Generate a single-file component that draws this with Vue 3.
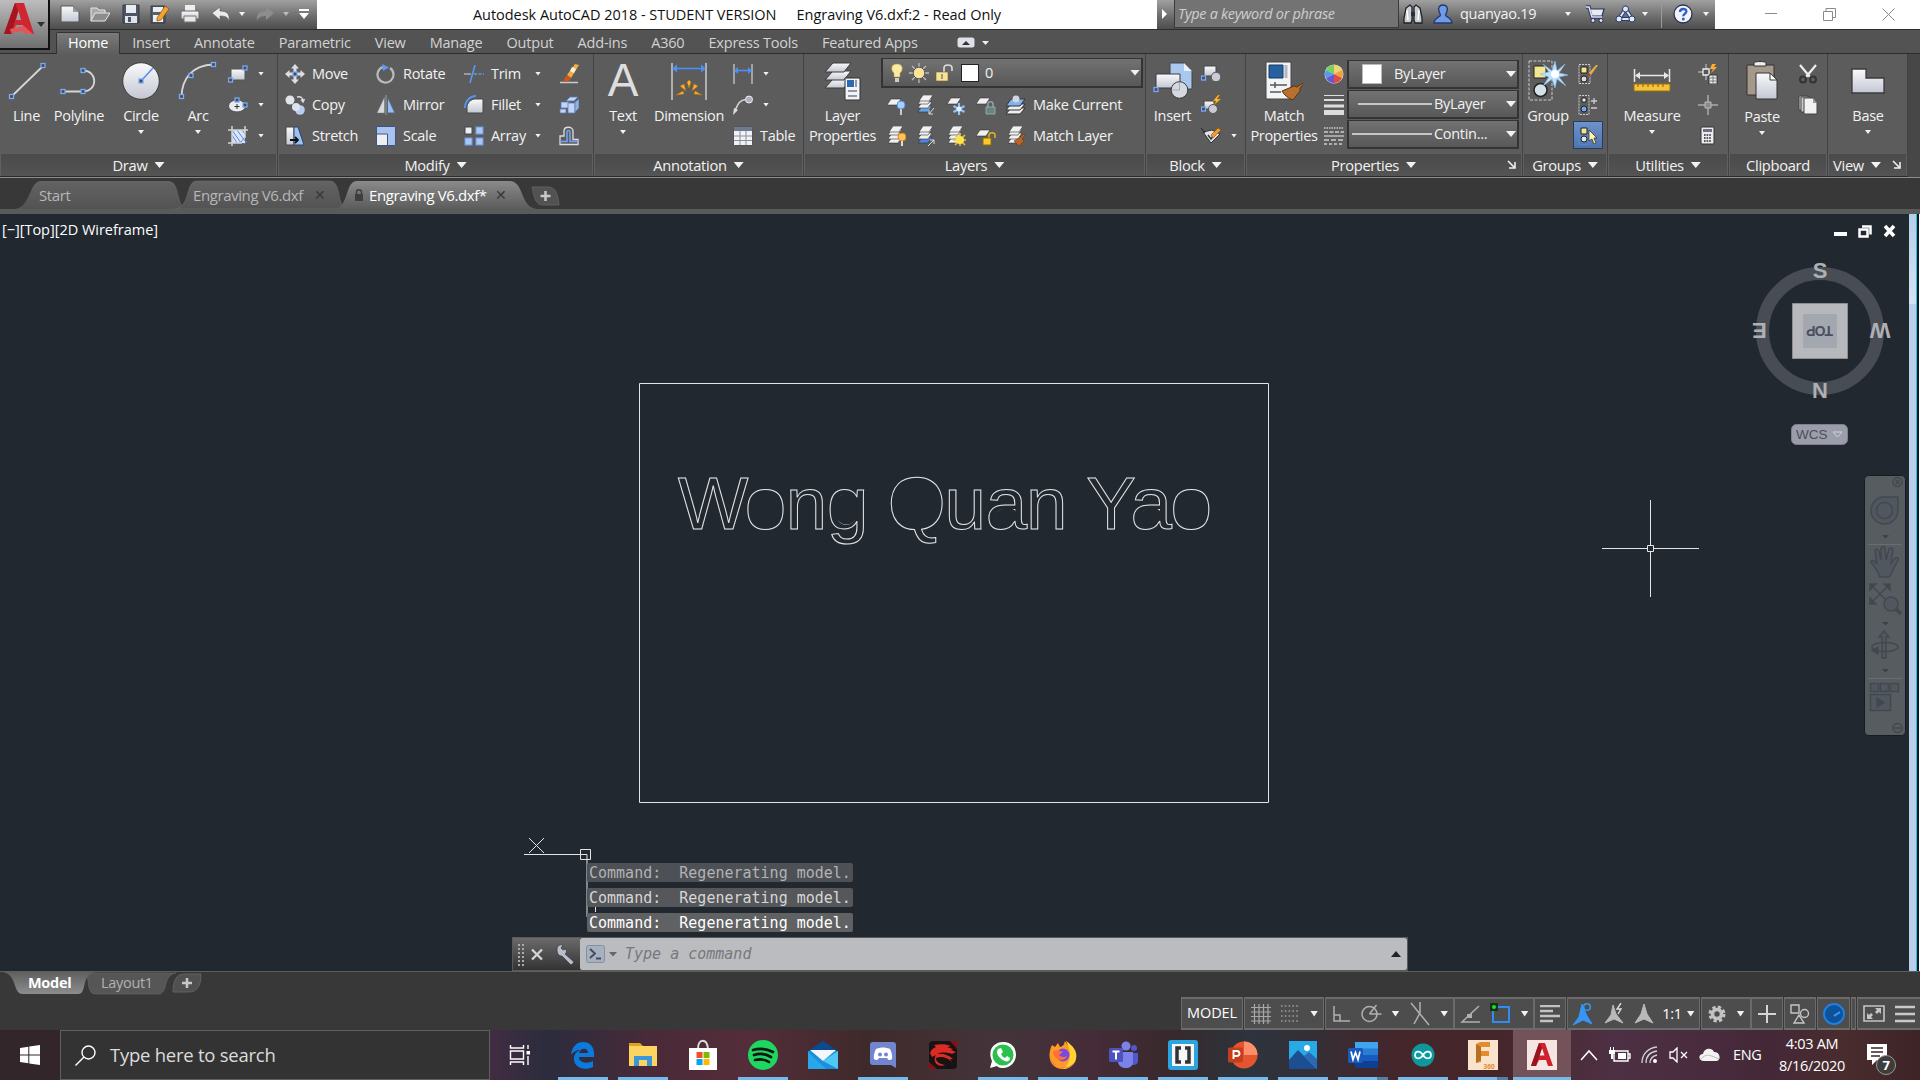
<script setup>
const h = (x, y) => `<rect x="${x - 2}" y="${y - 2}" width="4" height="4" fill="#454a55" stroke="#79a9f7" stroke-width="1.3"/>`
const sheet = (x, y, f = '#f1f1f1') => `<path d="M${x + 4} ${y}h10l-4 6h-10z" fill="${f}" stroke="#333" stroke-width=".6"/>`
const stack = (c) => sheet(2, 11, c) + sheet(2, 7) + sheet(2, 3) + sheet(3, 0)

const icons = {
  // quick access and title bar
  new: [20, 18, `<path d="M1 1h12l6 6v10H1z" fill="url(#gl)" stroke="#555"/><path d="M13 1v6h6z" fill="#999"/>`],
  open: [20, 18, `<path d="M1 16V3h6l2 2h6v3" fill="#aaa" stroke="#e8e8e8"/><path d="M1 16l4-8h15l-5 8z" fill="#8c8c8c" stroke="#e8e8e8"/>`],
  save: [18, 20, `<path d="M1 1h16v18H1z" fill="#4d5563" stroke="#353b47"/><path d="M4 1h10v8H4z" fill="#e8ebf0"/><path d="M3 12h12v7H3z" fill="#dfe3ea"/><path d="M6 13h3v5H6z" fill="#4d5563"/>`],
  saveas: [20, 20, `<path d="M1 2h14v17H1z" fill="#59606d" stroke="#353b47"/><path d="M3 3h10v5H3zM3 11h10v7H3z" fill="#eceef2"/><path d="M7 14l8-12 4 3-8 11-4 1z" fill="#f2a630" stroke="#8a4d10" stroke-width=".7"/>`],
  print: [20, 20, `<path d="M5 1h10v7H5z" fill="#eee"/><rect x="1" y="7" width="18" height="8" rx="1.5" fill="url(#gl)" stroke="#666"/><path d="M4 12h12v6H4z" fill="#e9e9e9" stroke="#777"/>`],
  undo: [20, 16, `<path d="M1 7l8-6v4c7 0 10 3 9 10-1-4-4-5-9-5v4z" fill="#ebebeb" stroke="#666" stroke-width=".7"/>`],
  redo: [20, 16, `<path d="M19 7l-8-6v4c-7 0-10 3-9 10 1-4 4-5 9-5v4z" fill="#8d8d8d"/>`],
  customize: [12, 12, `<path d="M1 1h10v2H1zM1 5h10l-5 6z" fill="#fff"/>`],
  binoculars: [20, 20, `<path d="M3 4l4-3 2 2v13l-1 3H1v-5zM17 4l-4-3-2 2v13l1 3h7v-5z" fill="#c9ccd2" stroke="#1f2226" stroke-width="1.3"/><path d="M8 8h4v4H8z" fill="#2a2d33"/><path d="M4 6l1 10M16 6l-1 10" stroke="#fff" stroke-width="1.5"/>`],
  user: [20, 20, `<path d="M10 1c4 0 5 3 4 6-.4 2-1 3-1.500 4 0 2 6 2 6.500 8H1c.5-6 6.500-6 6.500-8C7 10 6.400 9 6 7 5 4 6 1 10 1z" fill="#6f9bea" stroke="#263a68" stroke-width="1.3"/>`],
  cart: [20, 18, `<path d="M1 2h3l3 10h10" stroke="#29345a" stroke-width="3.600" fill="none"/><path d="M5 4h14l-2 7H7z" fill="#e7eaf2" stroke="#29345a" stroke-width="1.2"/><path d="M1 2h3l3 10h10" stroke="#dfe5f5" stroke-width="1.600" fill="none"/><circle cx="8" cy="15.500" r="2" fill="#dfe5f5" stroke="#29345a"/><circle cx="16" cy="15.500" r="2" fill="#dfe5f5" stroke="#29345a"/>`],
  a360: [21, 18, `<path d="M10.500 4L4 14h13z" fill="none" stroke="#2c3c6e" stroke-width="4"/><path d="M10.500 4L4 14h13z" fill="none" stroke="#dfe6f7" stroke-width="2"/><g fill="#e3e8f4" stroke="#2c3c6e"><circle cx="10.500" cy="4" r="3"/><circle cx="4" cy="14" r="3"/><circle cx="17" cy="14" r="3"/></g>`],
  help: [20, 20, `<circle cx="10" cy="10" r="9" fill="#f1f3f8" stroke="#2b3552" stroke-width="1.300"/><path d="M7 8c0-4 6.500-4 6.300-.5 0 2-3 2.300-3 4.800" fill="none" stroke="#2d5fc4" stroke-width="2.400"/><circle cx="10.300" cy="15" r="1.500" fill="#2d5fc4"/>`],
  minimise: [12, 12, `<path d="M0 5.500h12" stroke="#8a8a8a"/>`],
  restore: [13, 13, `<path d="M.5 3.500h9v9h-9zM3 3V.5h9.500v9H10" fill="none" stroke="#8a8a8a"/>`],
  close: [13, 13, `<path d="M.5 .5l12 12m0-12l-12 12" stroke="#8a8a8a"/>`],
  // draw
  line: [40, 40, `<path d="M5 35L36 5" stroke="#d5d5d5" stroke-width="1.800"/>${h(4.500, 35.500)}${h(36, 4.500)}`],
  polyline: [40, 40, `<path d="M4 30.500h20c15 0 15-21 0-21" fill="none" stroke="#d5d5d5" stroke-width="1.800"/>${h(4, 30.500)}${h(24, 30.500)}${h(24, 9.500)}`],
  circle: [40, 40, `<circle cx="20" cy="20" r="18.300" fill="url(#gl)" stroke="#3b3b3b"/><path d="M20 20L32 7" stroke="#4d8df0" stroke-width="1.500"/>${h(20, 20)}`],
  arc: [40, 40, `<path d="M3.500 35.500C4 18 14 4 35.500 3.500" fill="none" stroke="#d5d5d5" stroke-width="1.800"/>${h(3.500, 35.500)}${h(13, 14.500)}${h(35.500, 3.500)}`],
  rect: [20, 18, `<path d="M3 4h14v11H3z" fill="url(#gl)" stroke="#555"/>${h(2.500, 15)}${h(17, 3)}`],
  ellipse: [20, 16, `<ellipse cx="9" cy="9" rx="8.500" ry="6" fill="#e9ebf1" stroke="#555"/><path d="M9 7v5M6.500 9.500h5" stroke="#333"/>${h(9, 3)}${h(17, 8)}`],
  hatch: [20, 20, `<path d="M4 4h13v13H4z" fill="#dbe6fb"/><path d="M4 9l5 8M4 4l9 13M9 4l8 11M14 4l3 4M12 17l6-7M16 18l3-3" stroke="#5687dd"/><path d="M0 4h20M0 17h14M4 0v20M17 0v12" stroke="#d2d2d2" stroke-width="1.500"/>`],
  // modify
  move: [20, 20, `<path d="M10 0l4 4.500h-2.500V8h-3V4.500H6zM10 20l4-4.500h-2.500V12h-3v3.500H6zM0 10l4.500-4v2.500H8v3H4.500V14zM20 10l-4.500-4v2.500H12v3h3.500V14z" fill="#dcdee3"/>${h(10, 10)}`],
  copy: [20, 20, `<circle cx="5" cy="5" r="4.500" fill="#e3e4e8"/><circle cx="15" cy="15" r="4.800" fill="#b9cdf0"/><circle cx="11" cy="12" r="4" fill="#dce3f0"/><path d="M12 2c4-1 6 1 6 4m-2-1.500l2 2.500 1.500-3" stroke="#ddd" fill="none" stroke-width="1.300"/>`],
  stretch: [20, 20, `<path d="M1 1h8v18H1z" fill="url(#gl)" stroke="#444"/><path d="M9 1h4l6 18H9z" fill="#9dc0ee" stroke="#2c456c"/><path d="M5 14h8m-3-3l3 3-3 3" stroke="#111" stroke-width="1.800" fill="none"/>`],
  rotate: [20, 20, `<path d="M14 4a8 8 0 1 1-7-1" fill="none" stroke="#b9bbc0" stroke-width="2.200"/><path d="M6 0l7 3.500L7 7z" fill="#5a9cf5"/>`],
  mirror: [20, 20, `<path d="M8.500 2v16H1z" fill="#d7d9de" stroke="#777" stroke-width=".5"/><path d="M11.500 2v16H19z" fill="#93bdf5" stroke="#567"/><path d="M10 0v20" stroke="#9a9a9a"/>`],
  scale: [20, 20, `<path d="M.5 .5h19v19h-19z" fill="#a9c3ee" stroke="#3a5583"/><path d="M.5 8h11v11.500H.5z" fill="#eceef2" stroke="#3a5583"/>`],
  trim: [20, 18, `<path d="M0 9h7" stroke="#aaa" stroke-width="1.600"/><path d="M11 0L6 18" stroke="#5b9af0" stroke-width="1.600"/><path d="M10 9h10" stroke="#5b9af0" stroke-width="1.400" stroke-dasharray="3 1.500"/>`],
  fillet: [20, 20, `<path d="M3 18v-6c0-4 4-8 8-8h8v14z" fill="url(#gl)" stroke="#444"/><path d="M1 13C1 6 6 1 12 1" stroke="#5793ee" stroke-width="2" fill="none"/>`],
  array: [20, 20, `<rect x="1" y="1" width="7" height="7" fill="#eef0f4" stroke="#444"/><g fill="#a9c6f4" stroke="#6b9be4"><rect x="12" y="1" width="7" height="7"/><rect x="1" y="12" width="7" height="7"/><rect x="12" y="12" width="7" height="7"/></g>`],
  erase: [20, 20, `<path d="M1 18.500h18" stroke="#ccc" stroke-width="1.500"/><path d="M16 0l4 1-8 13-4-3z" fill="#f0ad48"/><path d="M13 3l4 2-2 4-4-2z" fill="#fff0d8"/><path d="M8 11l4 3c-2 4-5 4-8 3z" fill="#d4541d"/>`],
  explode: [20, 18, `<g fill="#c3d5f2" stroke="#587bb5" stroke-width=".8"><path d="M2 6h8v6H2z"/><path d="M1 13h6v4H1z"/><path d="M7 5l4-4h8l-4 4z"/><path d="M9 7h7v10H9z"/><path d="M16 6l4-3v9l-4 4z" fill="#8fb2e6"/></g>`],
  offset: [20, 20, `<path d="M1 18.500h18v-5h-5V5c0-5-9-5-9 0v5H1z" fill="none" stroke="#dedede" stroke-width="1.300"/><path d="M1 15.500h7V6c0-2 3-2 3 0v9.500h8" fill="none" stroke="#70a4f5" stroke-width="1.500"/>`],
  // annotation
  dimension: [36, 38, `<path d="M1 1v37M35 1v37" stroke="#ccc" stroke-width="1.500"/><path d="M4 6.500h28" stroke="#4d8ff2" stroke-width="1.600"/><path d="M1 6.500l5-4v8zM35 6.500l-5-4v8z" fill="#4d8ff2"/><g fill="#f9b42c" stroke="#b8690f" stroke-width=".6"><path d="M16 20l2 6 2-6-2-2zM9 24l6 5-2-7zM27 24l-6 5 2-7zM5 33l7-4 1 3zM31 33l-7-4-1 3z"/></g>`],
  lineardim: [20, 20, `<path d="M1 0v20M19 0v20" stroke="#bbb" stroke-width="1.500"/><path d="M3 6.500h14" stroke="#4d8ff2" stroke-width="1.600"/><path d="M1 6.500l4-3.500v7zM19 6.500l-4-3.500v7z" fill="#4d8ff2"/>`],
  leader: [20, 20, `<path d="M2 16C5 8 7 5 13 4.500" stroke="#d5d5d5" stroke-width="1.600" fill="none"/><path d="M0 20l1-7 4 2z" fill="#ddd"/><circle cx="16" cy="4.500" r="3.500" fill="#aeb2bd" stroke="#eee"/>`],
  table: [20, 20, `<path d="M.5 .5h19v19H.5z" fill="#f1f2f5" stroke="#555"/><path d="M1 1h18v4H1z" fill="#707a8d"/><path d="M1 10h18M1 14.500h18M7 5v14M13 5v14" stroke="#8b8f99"/>`],
  // layers
  layerprops: [38, 40, `<g fill="url(#gl)" stroke="#3c3c3c"><path d="M9 18h18l-7 9H1z"/><path d="M9 10h18l-7 9H1z"/><path d="M9 2h18l-7 9H1z"/></g><path d="M21 17h15v22H21z" fill="#f2f3f6" stroke="#333"/><path d="M23 19h7v7h-7z" fill="#2e6ab2"/><path d="M32 19v7M24 30h9M24 35h9" stroke="#778" stroke-width="1.500"/>`],
  bulb: [12, 20, `<path d="M6 1c7 0 6 7 3 9v4H3v-4C0 8-1 1 6 1z" fill="#fbe9a8" stroke="#b59a3d" stroke-width=".6"/><path d="M4 15h4v4H4z" fill="#ccc"/>`],
  sun: [20, 20, `<path d="M10 0v20M0 10h20M3 3l14 14M17 3L3 17" stroke="#bcbcbc" stroke-width="1.300"/><circle cx="10" cy="10" r="5.800" fill="#fbe39a" stroke="#555"/>`],
  unlock: [20, 18, `<path d="M9 9V4c0-4 8-4 8 0v3" fill="none" stroke="#dedede" stroke-width="1.600"/><path d="M1 8h12v9H1z" fill="#f8e29a" stroke="#765f1e" stroke-width=".6"/><path d="M7 10v5" stroke="#554"/>`],
  layoff: [20, 20, `${sheet(1, 4)}<circle cx="15" cy="10" r="4" fill="#a8d0ff" stroke="#5593dd"/><path d="M15 14v6" stroke="#ccc" stroke-width="2"/>`],
  laymove: [20, 20, `${stack('#64a3ec')}<path d="M18 13l-5 6m0-4v4h4" stroke="#ddd" fill="none"/>`],
  layfreeze: [20, 20, `${sheet(1, 3)}<path d="M13 8v12M7.500 11l11 6M7.500 17l11-6" stroke="#8fc1fb" stroke-width="2.200"/><circle cx="13" cy="14" r="2.500" fill="#e3f1ff"/>`],
  laylock: [20, 20, `${sheet(0, 3)}<path d="M12 12V9c0-3 5-3 5 0v3" fill="none" stroke="#8fa5a4" stroke-width="1.500"/><path d="M10 12h9v7h-9z" fill="#688482" stroke="#9db5b3" stroke-width=".8"/>`],
  laycur: [20, 20, `<path d="M5 13h14l-5 6H0z" fill="#eee" stroke="#333"/><path d="M5 9h14l-5 6H0z" fill="#eee" stroke="#333"/><path d="M5 4h14l-5 7H0z" fill="#7fb2ee" stroke="#333"/><circle cx="10" cy="4" r="3.500" fill="#d2d5dc"/>`],
  layon: [20, 20, `${stack('#f1f1f1')}<circle cx="16" cy="11" r="4" fill="#ffc457" stroke="#e08520"/><path d="M16 15v5" stroke="#ddd" stroke-width="2"/>`],
  layunmove: [20, 20, `${stack('#4a86dd')}<path d="M12 20l6-6m-4 0h4v4" stroke="#ddd" fill="none"/>`],
  laythaw: [20, 20, `${stack('#f1f1f1')}<path d="M14 7v14M7 14h13M9 9l10 10M19 9L9 19" stroke="#e7c235" stroke-width="1.500"/><circle cx="14" cy="14" r="4" fill="#ffe34d"/>`],
  layunlock: [20, 20, `${sheet(0, 4)}<path d="M13 13V9c0-3 6-3 6 0v3" fill="none" stroke="#e3b21c" stroke-width="1.500"/><path d="M7 12h8v7H7z" fill="#f7c92b" stroke="#8d6b08"/>`],
  laymatch: [20, 20, `${stack('#f1f1f1')}<path d="M19 9l-3 4 2 2-5 5-5-5 5-3 1 0 3-4z" fill="#b8642a" stroke="#6e3208" stroke-width=".6"/>`],
  // block
  insert: [40, 38, `<path d="M17 1h14l8 8v18H17z" fill="#a9c8ee" stroke="#444"/><path d="M31 1v8h8z" fill="#eaf1fb"/><path d="M3 12h24v14H3z" fill="url(#gl)" stroke="#3b3b3b"/><circle cx="26.500" cy="28" r="8.300" fill="#d5d8e0" stroke="#3b3b3b"/><path d="M26.500 20v8h-8" stroke="#a5a9b3" fill="none"/>${h(3, 27.500)}`],
  createblock: [20, 18, `<path d="M3 1h12v10H3z" fill="url(#gl)" stroke="#444"/><circle cx="15" cy="12" r="4.800" fill="#c8cbd4" stroke="#555"/>${h(2.500, 13)}`],
  editblock: [20, 20, `<path d="M3 6h10v8H3z" fill="url(#gl)" stroke="#444"/><circle cx="12" cy="14" r="4.500" fill="#c8cbd4" stroke="#555"/>${h(2.500, 14)}<path d="M17 0l-5 6h3l-2 4 7-6h-4l3-4z" fill="#ffbe2e" stroke="#a8650d" stroke-width=".5"/>`],
  attrs: [20, 18, `<path d="M2 5l8 11 9-9-8-4z" fill="#e2e3e8" stroke="#333"/><path d="M7 8l3 4 4-5" stroke="#333" fill="none" stroke-width="1.500"/><path d="M0 1l4 5" stroke="#222"/><path d="M10 8l7-7 3 2-8 8z" fill="#f29c2c" stroke="#8c4b0d" stroke-width=".6"/>`],
  // properties
  matchprops: [38, 40, `<path d="M1 1h25v37H1z" fill="#f3f4f7" stroke="#444"/><path d="M4 4h14v13H4z" fill="#27619f" stroke="#173b61"/><path d="M21 4v13" stroke="#b4b7c0" stroke-width="3"/><path d="M5 24h17M5 31h11M10 21v6" stroke="#555" stroke-width="1.500"/><path d="M38 22l-6 4-3-1-12 5c2 4 7 8 11 9l7-9v-3l3-3z" fill="#b96f2d" stroke="#5e3411"/>`],
  wheel: [20, 20, `<circle cx="10" cy="10" r="9.500" fill="#ddd"/><path d="M10 10V1a9 9 0 0 1 8 5z" fill="#f2d472"/><path d="M10 10l8-4a9 9 0 0 1 0 8z" fill="#f0a33c"/><path d="M10 10l8 4a9 9 0 0 1-8 5z" fill="#e04b42"/><path d="M10 10v9a9 9 0 0 1-8-5z" fill="#6a57d6"/><path d="M10 10l-8 4a9 9 0 0 1 0-8z" fill="#4f9df0"/><path d="M10 10L2 6a9 9 0 0 1 8-5z" fill="#79d05b"/>`],
  weights: [20, 20, `<path d="M0 .5h20" stroke="#ddd"/><path d="M0 5h20" stroke="#ddd" stroke-width="2"/><path d="M0 11h20" stroke="#ddd" stroke-width="3"/><path d="M0 17.500h20" stroke="#ddd" stroke-width="5"/>`],
  linetypes: [20, 18, `<g stroke="#ccc" stroke-width="1.300"><path d="M0 1h20" stroke-dasharray="1.500 1"/><path d="M0 5h20" stroke-dasharray="4 1.500"/><path d="M0 9h20"/><path d="M0 13h20" stroke-dasharray="5 2"/><path d="M0 17h20" stroke-dasharray="3 2"/></g>`],
  // groups
  group: [40, 42, `<rect x="1" y="1" width="23" height="39" fill="none" stroke="#ccc" stroke-dasharray="3 1.500"/><path d="M6 6h12v12H6z" fill="#f2e68e" stroke="#222"/><circle cx="12.500" cy="30" r="6.500" fill="#d4e2e8" stroke="#222" stroke-width="1.500"/><path d="M27 1l2 10 8-7-6 9 9 2-9 2 7 9-9-7-2 9-3-9-9 7 6-9-9-3 9-2-6-8 9 7z" fill="#bfe0fb" stroke="#7fbdf2" stroke-width=".6"/><circle cx="27" cy="14" r="4" fill="#fff"/>`],
  groupedit: [20, 20, `<rect x="1" y=".5" width="11" height="19" fill="none" stroke="#ccc" stroke-dasharray="2 1"/><path d="M3 3h6v6H3z" fill="#f2e68e" stroke="#222"/><circle cx="6" cy="15" r="3" fill="#d7dce2" stroke="#222"/><path d="M20 1l-2 0-7 8 2 2z" fill="#e8b33c"/><path d="M10 13l1-4 2 2z" fill="#d3371d"/>`],
  groupadd: [20, 20, `<rect x="1" y=".5" width="10" height="19" fill="none" stroke="#ccc" stroke-dasharray="2 1"/><path d="M4 3h4v4H4z" fill="#eee" stroke="#222"/><circle cx="6" cy="14" r="3" fill="#7ba4ea" stroke="#123"/><path d="M13 6h6M16 3v6M13 13h6" stroke="#ccc" stroke-width="1.300"/>`],
  groupsel: [20, 20, `<rect x="1" y=".5" width="10" height="19" fill="none" stroke="#4e8df0" stroke-dasharray="2 1"/><path d="M3 3h6v6H3z" fill="#f2e68e" stroke="#222"/><circle cx="6" cy="14" r="3" fill="#dfe5ec" stroke="#222"/><path d="M11 5v11l3-2 2 5 2-1-2-5h3z" fill="#fff3b0" stroke="#222" stroke-width=".7"/>`],
  // utilities, clipboard, view
  measure: [38, 24, `<path d="M1.500 0v13M36.500 0v13M3 6.500h32" stroke="#e8e8e8" stroke-width="1.500"/><path d="M2 6.500l5-3.500v7zM36 6.500l-5-3.500v7z" fill="#e8e8e8"/><path d="M1 15h36v7H1z" fill="#f3c33a" stroke="#a06f0c"/><path d="M5 15v3M10 15v3M15 15v3M20 15v3M25 15v3M30 15v3" stroke="#8a5e0a"/>`],
  quickcalc: [20, 20, `<path d="M8 0v16M0 8h12" stroke="#ccc"/><path d="M5 5h6v6H5z" fill="#555" stroke="#eee" stroke-width="1.300"/><path d="M14 0l-2 5h3l-2 4 6-6h-3l2-3z" fill="#ffae2b"/><path d="M11 11h8v9h-8z" fill="#eee" stroke="#333"/><path d="M12 14h6M12 17h6M15 12v7" stroke="#777"/>`],
  point: [20, 20, `<path d="M10 0v20M0 10h20" stroke="#aaa" stroke-width="1.500"/><path d="M7 7h6v6H7z" fill="#8a8a8a" stroke="#bbb"/>`],
  calc: [16, 20, `<rect x="1" y="1" width="13" height="17" rx="1" fill="#ececf0" stroke="#333"/><path d="M3 3h9v3H3z" fill="#6b7180"/><path d="M4 9h7M4 12h7M4 15h7" stroke="#555" stroke-width="2" stroke-dasharray="1.600 1"/>`],
  paste: [32, 40, `<path d="M1 4h27v30H1z" fill="#a5998c" stroke="#333"/><path d="M8 2c0-2 12-2 12 0v3H8z" fill="#eee" stroke="#333"/><path d="M10 12h14l7 7v19H10z" fill="url(#gl)" stroke="#333"/><path d="M24 12v7h7z" fill="#fff" stroke="#333"/>`],
  cut: [20, 20, `<path d="M2 1l10 12M18 1L8 13" stroke="#eee" stroke-width="2.200"/><circle cx="5" cy="15.500" r="3" fill="none" stroke="#333" stroke-width="2"/><circle cx="15" cy="15.500" r="3" fill="none" stroke="#333" stroke-width="2"/>`],
  copyclip: [20, 20, `<path d="M1 1h9v14H1z" fill="#ccc" stroke="#444"/><path d="M3 2h9v15H3z" fill="#ccc" stroke="#444"/><path d="M6 3h9l4 5v11H6z" fill="#f2f2f2" stroke="#444"/><path d="M15 3v5h4z" fill="#999"/>`],
  base: [34, 26, `<path d="M1 1h14v9h18v15H1z" fill="url(#gl)" stroke="#3b3b3b" stroke-width="1.300"/>`],
  // status bar
  sgrid: [20, 20, `<path d="M3.500 0v20M8 0v20M12.500 0v20M17 0v20M0 3.500h20M0 8h20M0 12.500h20M0 17h20" stroke="#a8a8a8" stroke-width="1.200"/>`],
  sdots: [20, 20, `<path d="M1 2h19M1 7h19M1 12h19M1 17h19" stroke="#9d9d9d" stroke-width="1.600" stroke-dasharray="1.600 2.200"/>`],
  ortho: [20, 20, `<path d="M3 2v15h16M3 11h6v6" stroke="#b0b0b0" stroke-width="1.500" fill="none"/>`],
  polar: [22, 20, `<circle cx="9.500" cy="10" r="7.500" stroke="#b0b0b0" stroke-width="1.500" fill="none"/><path d="M9.500 10h12M9.500 10l7-9" stroke="#b0b0b0" stroke-width="1.500"/>`],
  iso: [22, 24, `<path d="M2 1l18 22M11 0v11M11 11L5 22" stroke="#b0b0b0" stroke-width="1.500"/>`],
  otrack: [22, 20, `<path d="M20 2L3 18h18" stroke="#b0b0b0" stroke-width="1.500" fill="none"/><path d="M8 10h5v4H8z" fill="#b0b0b0"/>`],
  osnap: [22, 22, `<path d="M3 4h16v15H3z" stroke="#2f8df0" stroke-width="2" fill="none"/><path d="M0 0h8v8H0z" fill="#143314"/><circle cx="4" cy="4" r="2" fill="#19e32d"/>`],
  lweight: [20, 18, `<path d="M0 1h20M0 6h13M0 11h20M0 16h13" stroke="#c2c2c2" stroke-width="2.500"/>`],
  annoblue: [22, 24, `<path d="M10 2l4 10 6 10-9-4-10 5 6-8z" fill="#3795f5" stroke="#3795f5"/><circle cx="15" cy="5" r="3.300" fill="none" stroke="#3795f5" stroke-width="1.500"/>`],
  annoauto: [22, 22, `<path d="M10 2l3 9 7 9-9-4-9 4 6-8z" fill="#b9b9b9" stroke="#b9b9b9"/><path d="M18 0l-4 6h4l-3 5" stroke="#ddd" fill="none" stroke-width="1.400"/>`],
  anno: [20, 22, `<path d="M10 1l3 10 6 9-9-4-9 4 6-9z" fill="#b9b9b9" stroke="#b9b9b9"/>`],
  gear: [18, 18, `<circle cx="9" cy="9" r="6.500" fill="none" stroke="#c2c2c2" stroke-width="4" stroke-dasharray="3 2.100"/><circle cx="9" cy="9" r="4.500" fill="none" stroke="#c2c2c2" stroke-width="3.600"/>`],
  plus: [20, 20, `<path d="M10 1v18M1 10h18" stroke="#d5d5d5" stroke-width="2"/>`],
  isolate: [20, 20, `<g fill="none" stroke="#c5c5c5" stroke-width="1.400"><path d="M1 1h8v8H1zM9 11l5 8H4z"/><circle cx="14.500" cy="9.500" r="4"/></g>`],
  hw: [24, 24, `<circle cx="12" cy="12" r="10" fill="#0f5298" stroke="#1d80e5" stroke-width="2"/><path d="M12 14l6-4" stroke="#3a9bff" stroke-width="2"/>`],
  full: [22, 18, `<path d="M1 1h20v15H1z" fill="none" stroke="#c5c5c5" stroke-width="1.600"/><path d="M12 3h6v6l-2-2-2 2-2-2 2-2zM4 14V8l2 2 2-2 2 2-2 2 2 2z" fill="#c5c5c5"/>`],
  menu: [20, 18, `<path d="M0 2h20M0 9h20M0 16h20" stroke="#c9c9c9" stroke-width="2.500"/>`],
  // taskbar
  taskview: [22, 22, `<path d="M1.500 1v3h13V1M1.500 7h13v8h-13zM1.500 21v-3h13v3M19 1v4M19 12v9" fill="none" stroke="#fff" stroke-width="1.400"/><path d="M17.500 7h3.500v3.500h-3.500z" fill="#fff"/>`],
  edge: [28, 28, `<path d="M2 14C3 5 8 1 14 1c8 0 12 6 11 15H10c0 6 8 7 14 4v6c-8 4-18 1-19-7-.5-5 2-8 6-10-4 0-7 2-9 5zM10 12h9c0-6-8-5-9 0z" fill="#0a7bdc"/>`],
  explorer: [30, 28, `<path d="M1 2h11l3 3v4H1z" fill="#e3a21a"/><path d="M1 5h28v20H1z" fill="#fcd462"/><path d="M6 25V15h18v10h-5v-6h-8v6z" fill="#3c96dc"/>`],
  store: [30, 32, `<path d="M10 10c0-11 9-11 10 0" fill="none" stroke="#ddd" stroke-width="2"/><path d="M1 9h28v22H1z" fill="#fff"/><path d="M8.500 13h6v6h-6z" fill="#f25022"/><path d="M15.500 13h6v6h-6z" fill="#7fba00"/><path d="M8.500 20h6v6h-6z" fill="#00a4ef"/><path d="M15.500 20h6v6h-6z" fill="#ffb900"/>`],
  spotify: [30, 30, `<circle cx="15" cy="15" r="15" fill="#1ed760"/><path d="M5 10c7-2 14-1 20 2M6 15c6-2 12-1 17 2M7 20c5-1 10-1 14 2" stroke="#0c1510" stroke-width="2.700" fill="none" stroke-linecap="round"/>`],
  mail: [30, 30, `<path d="M0 11L15 1l15 10z" fill="#0a4a8f"/><path d="M0 11h30v18H0z" fill="#1b90df"/><path d="M2 10h26L15 21z" fill="#f5f7fa"/><path d="M0 12l18 17H0z" fill="#28a8ea"/><path d="M30 11v18L15 21z" fill="#50c8f5"/>`],
  discord: [26, 28, `<path d="M3 1h20c2 0 3 1 3 3v23l-5-3H3c-2 0-3-1-3-3V4c0-2 1-3 3-3z" fill="#7186cf"/><path d="M6 8c5-2 9-2 14 0 2 4 2.500 7 2 10-2 2-4 1-5-1H9c-1 2-3 3-5 1-.5-3 0-6 2-10z" fill="#fff"/><circle cx="10" cy="13.500" r="2" fill="#7186cf"/><circle cx="16" cy="13.500" r="2" fill="#7186cf"/>`],
  dragon: [30, 30, `<rect x="1" y="1" width="28" height="28" rx="4" fill="#171314"/><path d="M22 1h7v8M1 22v7h8" fill="#8a0e18"/><path d="M2 13c1-3 3-5 6-6l-2-2c7-1 12-1 17 1l-4 1 6 2-2 1 5 2-4 2c-5-2-12-2-15 0 6-1 12 1 16 5l-3 0 2 3c-5-5-11-6-16-4 0 4 4 6 9 7-8 3-13-4-9-10l-4 2z" fill="#dc2a25"/>`],
  whatsapp: [28, 28, `<path d="M1 27l2-7C-2 9 5 1 14 1s13 6 13 13-6 13-13 13c-2 0-4 0-6-2z" fill="#fff"/><circle cx="14" cy="14" r="10.500" fill="#29c04c"/><path d="M9 8l3-1 2 4-2 2c1 2 2 3 4 4l2-2 3 2c0 3-3 4-5 3-5-2-8-6-8-9 0-1 .5-2 1-3z" fill="#fff"/>`],
  firefox: [30, 30, `<path d="M4 5l3 2 3-4 2 4c4-1 4-3 5-6 2 4 4 4 4 6l2-1c6 9 3 23-8 23C1 29-1 15 4 5z" fill="#ff9a27"/><path d="M18 1c6 4 12 10 10 18-1 6-7 10-13 10 8-5 9-17 3-28z" fill="#ffd332"/><path d="M2 17c2 12 18 14 25 5-4 8-21 9-25-5z" fill="#f63261"/><circle cx="15" cy="15" r="6.500" fill="#7a49e0"/><path d="M5 11c5-2 7 0 10 1l-4 3c3 3 6 2 8 1-3 7-14 4-14-5z" fill="#ff7139"/>`],
  teams: [30, 28, `<circle cx="18" cy="5" r="4.500" fill="#7b83eb"/><circle cx="26" cy="7" r="3" fill="#5059c9"/><path d="M20 12h10v8c0 5-8 5-10 1z" fill="#5059c9"/><path d="M10 11h15v10c0 8-14 8-15 0z" fill="#7b83eb"/><rect x="1" y="7" width="14" height="14" rx="1.500" fill="#4b53bc"/><path d="M4.500 10.500h7M8 10.500v8" stroke="#fff" stroke-width="2"/>`],
  brackets: [30, 30, `<rect x="0" y="0" width="30" height="30" rx="3" fill="#2ba4e0"/><path d="M4 4h22v22H4z" fill="#f4f6f7"/><path d="M13 8H9v14h4M17 8h4v14h-4" fill="none" stroke="#333" stroke-width="3.500"/>`],
  ppt: [30, 28, `<circle cx="16" cy="14" r="13.500" fill="#e2552f"/><path d="M16 .5A13.500 13.500 0 0 1 29.500 14H16z" fill="#ff8f6b"/><rect x="0" y="6.500" width="15" height="15" rx="1.500" fill="#c43e1c"/><path d="M5.500 18v-8h3c4 0 4 5 0 5h-3" stroke="#fff" stroke-width="1.900" fill="none"/>`],
  photos: [28, 28, `<path d="M0 0h28v28H0z" fill="#28a9e8"/><path d="M0 19l9-10 19 19H0z" fill="#1c4f91"/><path d="M15 15l5-4 8 7v10z" fill="#2a6ab5"/><circle cx="18" cy="7" r="3" fill="#fff"/>`],
  word: [30, 28, `<path d="M7 1h23v7H7z" fill="#41a5ee"/><path d="M7 7.500h23v7H7z" fill="#2b7cd3"/><path d="M7 14h23v7H7z" fill="#185abd"/><path d="M7 20h23v7H7z" fill="#103f91"/><rect y="7" width="15" height="15" rx="1.500" fill="#185abd"/><path d="M3 10.500l2 8 2.500-7 2.500 7 2-8" fill="none" stroke="#fff" stroke-width="1.700"/>`],
  arduino: [24, 24, `<circle cx="12" cy="12" r="11.500" fill="#0f979c"/><path d="M12 12c-3-5-8-4-8 0s5 5 8 0 8-4 8 0-5 5-8 0z" fill="none" stroke="#e8ffff" stroke-width="1.700"/>`],
  fusion: [30, 30, `<path d="M0 0h30v30H0z" fill="#f9e3cd"/><path d="M8 4l4-2h10v5h-9v4h8v5h-8v6l-5 1z" fill="#e68a2e"/><path d="M8 4l5 3v13l-5 3z" fill="#b8701f"/><text x="15.500" y="28.500" font-size="6.500" font-weight="700" letter-spacing="0" fill="#e68a2e">360</text>`],
  acad: [30, 30, `<path d="M0 0h30v30H0z" fill="#f5e6e4"/><path fill-rule="evenodd" d="M4 26L12 3h6l8 23h-5l-2-6h-7l-3 6zM12.500 15.500h5L15 8z" fill="#d0222e"/><path d="M12 3l3 5-6 18H4z" fill="#96161f"/>`],
  chevron: [18, 12, `<path d="M1 11l8-9 8 9" stroke="#fff" stroke-width="1.500" fill="none"/>`],
  battery: [22, 16, `<path d="M5 4h14v10H5zM19 7h2v4h-2" fill="none" stroke="#fff" stroke-width="1.400"/><path d="M9 6h8v6H9zM0 3h6v4H0zM1 0h1v3H1zM4 0h1v3H4zM2 7h2v5H2z" fill="#fff"/>`],
  wifi: [18, 18, `<g fill="none" stroke="#cfcfcf" stroke-width="1.300"><path d="M1 17C1 8 7 2 16 1M5 17c0-7 4-11 11-12M9 17c0-4 3-7 7-8"/></g><circle cx="14" cy="15" r="2" fill="#fff"/>`],
  mute: [20, 16, `<path d="M1 5h3l4-4v14l-4-4H1z" fill="none" stroke="#fff" stroke-width="1.300"/><path d="M12 5l6 6m0-6l-6 6" stroke="#fff" stroke-width="1.300"/>`],
  cloud: [22, 14, `<path d="M5 13c-6 0-6-7-1-7C5 0 13-1 15 4c6-1 8 9 2 9z" fill="#f2f2f2"/><path d="M2 11c5-6 9-4 18 0" stroke="#bbb" fill="none"/>`],
  notif: [20, 22, `<path d="M0 0h20v16H10l-5 5v-5H0z" fill="#fff"/><path d="M4 4h12M4 8h12M4 12h9" stroke="#3a2526" stroke-width="1.500"/>`],
}

const menu = ['Home', 'Insert', 'Annotate', 'Parametric', 'View', 'Manage', 'Output', 'Add-ins', 'A360', 'Express Tools', 'Featured Apps']
const modify = [
  [['move', 'Move'], ['copy', 'Copy'], ['stretch', 'Stretch']],
  [['rotate', 'Rotate'], ['mirror', 'Mirror'], ['scale', 'Scale']],
  [['trim', 'Trim', 1], ['fillet', 'Fillet', 1], ['array', 'Array', 1]],
  [['erase'], ['explode'], ['offset']],
]
const layerRows = [
  [['layoff', 'laymove', 'layfreeze', 'laylock', 'laycur'], 'Make Current'],
  [['layon', 'layunmove', 'laythaw', 'layunlock', 'laymatch'], 'Match Layer'],
]
const history = [1, 2, 3]
const apps = [
  ['edge', 1], ['explorer', 1], ['store', 0], ['spotify', 1], ['mail', 0], ['discord', 1], ['dragon', 0], ['whatsapp', 1], ['firefox', 1],
  ['teams', 1], ['brackets', 1], ['ppt', 1], ['photos', 1], ['word', 2], ['arduino', 1], ['fusion', 2], ['acad', 3],
]

const Ico = (p) => {
  const [w, ht, m] = icons[p.n]
  return hsvg('svg', { class: 'ico', width: w, height: ht, viewBox: `0 0 ${w} ${ht}`, innerHTML: m })
}
Ico.props = ['n']
</script>

<script>
import { h as hsvg } from 'vue'
</script>

<template>
  <div class="app">
    <svg class="defs" width="0" height="0">
      <defs>
        <linearGradient id="gl" x1="0" y1="0" x2="0" y2="1">
          <stop offset="0" stop-color="#fafafc" />
          <stop offset="1" stop-color="#c3c7d3" />
        </linearGradient>
        <linearGradient id="tabDim" x1="0" y1="0" x2="0" y2="1">
          <stop offset="0" stop-color="#636363" />
          <stop offset="1" stop-color="#535353" />
        </linearGradient>
        <linearGradient id="tabLit" x1="0" y1="0" x2="0" y2="1">
          <stop offset="0" stop-color="#8a8a8a" />
          <stop offset="1" stop-color="#5c5c5c" />
        </linearGradient>
        <linearGradient id="modelLit" x1="0" y1="0" x2="0" y2="1">
          <stop offset="0" stop-color="#5f5f5f" />
          <stop offset="1" stop-color="#8d8d8d" />
        </linearGradient>
      </defs>
    </svg>

    <header class="titlebar">
      <div class="qat">
        <Ico n="new" class="q1" /><Ico n="open" class="q2" /><Ico n="save" class="q3" /><Ico n="saveas" class="q4" />
        <Ico n="print" class="q5" /><Ico n="undo" class="q6" /><i class="dn q7"></i><Ico n="redo" class="q8" />
        <i class="dn dim q9"></i><Ico n="customize" class="q10" />
      </div>
      <div class="title"><span>Autodesk AutoCAD 2018 - STUDENT VERSION</span><span>Engraving V6.dxf:2 - Read Only</span></div>
      <div class="info">
        <i class="rt"></i>
        <div class="keyword">Type a keyword or phrase</div>
        <Ico n="binoculars" /><Ico n="user" class="usr" /><span class="uname">quanyao.19</span><i class="dn"></i>
        <Ico n="cart" class="cart" /><Ico n="a360" class="tri" /><i class="dn"></i>
        <b class="sep"></b><Ico n="help" /><i class="dn hd"></i>
      </div>
      <div class="win"><Ico n="minimise" /><Ico n="restore" /><Ico n="close" /></div>
    </header>
    <div class="appbtn">
      <svg width="49" height="49" viewBox="0 0 49 49">
        <path fill-rule="evenodd" d="M4 34L15 3h9l10 31h-8l-3-9h-7l-4 9zM16 20h5l-2.500-9z" fill="#cf2630" />
        <path d="M15 3l3 8-7 23H4z" fill="#a5141f" /><path d="M10 29l14-3 9 8h-7l-4-3-11 2z" fill="#e2565b" />
        <path d="M37 22h8l-4 5z" fill="#2f3236" />
      </svg>
    </div>

    <nav class="menu">
      <span v-for="(m, i) in menu" :key="m" :class="{ on: i === 0 }">{{ m }}</span>
      <svg class="ribtoggle" width="32" height="12" viewBox="0 0 32 12">
        <rect x=".5" y=".5" width="17" height="10" rx="2.500" fill="#dfe1e8" /><path d="M5 8l4-4 4 4z" fill="#333" /><path d="M25 4h7l-3.500 4z" fill="#eee" />
      </svg>
    </nav>

    <section class="ribbon">
      <div class="panel p-draw">
        <div class="body">
          <div class="big w53"><div class="pic"><Ico n="line" /></div><p>Line</p></div>
          <div class="big w52"><div class="pic"><Ico n="polyline" /></div><p>Polyline</p></div>
          <div class="big w72"><div class="pic"><Ico n="circle" /></div><p>Circle</p><i class="dn"></i></div>
          <div class="big w42"><div class="pic"><Ico n="arc" /></div><p>Arc</p><i class="dn"></i></div>
          <div class="col ml9">
            <div v-for="n in ['rect', 'ellipse', 'hatch']" :key="n" class="row"><Ico :n="n" /><i class="dn ml10"></i></div>
          </div>
        </div>
        <footer>Draw<i class="dn lg"></i></footer>
      </div>
      <div class="panel p-modify">
        <div class="body">
          <div v-for="(c, i) in modify" :key="i" class="col" :class="'m' + i">
            <div v-for="r in c" :key="r[0]" class="row"><span class="slot"><Ico :n="r[0]" /></span><span v-if="r[1]" class="lbl">{{ r[1] }}</span><i v-if="r[2]" class="dn push"></i></div>
          </div>
        </div>
        <footer>Modify<i class="dn lg"></i></footer>
      </div>
      <div class="panel p-annot">
        <div class="body">
          <div class="big w58"><div class="pic letter">A</div><p>Text</p><i class="dn"></i></div>
          <div class="big w74"><div class="pic"><Ico n="dimension" /></div><p>Dimension</p></div>
          <div class="col ml7">
            <div class="row"><Ico n="lineardim" /><i class="dn ml10"></i></div>
            <div class="row"><Ico n="leader" /><i class="dn ml10"></i></div>
            <div class="row"><Ico n="table" /><span class="lbl">Table</span></div>
          </div>
        </div>
        <footer>Annotation<i class="dn lg"></i></footer>
      </div>
      <div class="panel p-layers">
        <div class="body">
          <div class="big w77"><div class="pic"><Ico n="layerprops" /></div><p>Layer</p><p>Properties</p></div>
          <div class="col">
            <div class="combo layercombo"><Ico n="bulb" /><Ico n="sun" /><Ico n="unlock" /><b class="swatch"></b><span>0</span><i class="dn lg"></i></div>
            <div v-for="r in layerRows" :key="r[1]" class="row lrow"><Ico v-for="n in r[0]" :key="n" :n="n" /><span class="lbl">{{ r[1] }}</span></div>
          </div>
        </div>
        <footer>Layers<i class="dn lg"></i></footer>
      </div>
      <div class="panel p-block">
        <div class="body">
          <div class="big w53"><div class="pic"><Ico n="insert" /></div><p>Insert</p></div>
          <div class="col">
            <div class="row"><Ico n="createblock" /></div>
            <div class="row"><Ico n="editblock" /></div>
            <div class="row"><Ico n="attrs" /><i class="dn ml10"></i></div>
          </div>
        </div>
        <footer>Block<i class="dn lg"></i></footer>
      </div>
      <div class="panel p-props">
        <div class="body">
          <div class="big w76"><div class="pic"><Ico n="matchprops" /></div><p>Match</p><p>Properties</p></div>
          <div class="col picol"><div class="row"><Ico n="wheel" /></div><div class="row"><Ico n="weights" /></div><div class="row"><Ico n="linetypes" /></div></div>
          <div class="combos">
            <div class="combo"><b class="swatch sw2"></b><span class="by">ByLayer</span><i class="dn lg"></i></div>
            <div class="combo"><u class="l1"></u><span>ByLayer</span><i class="dn lg"></i></div>
            <div class="combo"><u class="l2"></u><span>Contin...</span><i class="dn lg"></i></div>
          </div>
        </div>
        <footer><span class="grow">Properties<i class="dn lg"></i></span><svg class="launch" width="10" height="10" viewBox="0 0 10 10"><path d="M1 1l6 6M8 2v6H2" stroke="#eee" stroke-width="1.600" fill="none" /></svg></footer>
      </div>
      <div class="panel p-groups">
        <div class="body">
          <div class="big w50"><div class="pic"><Ico n="group" /></div><p>Group</p></div>
          <div class="col gcol"><div class="row"><Ico n="groupedit" /></div><div class="row"><Ico n="groupadd" /></div><div class="row sel"><Ico n="groupsel" /></div></div>
        </div>
        <footer>Groups<i class="dn lg"></i></footer>
      </div>
      <div class="panel p-util">
        <div class="body">
          <div class="big w88"><div class="pic"><Ico n="measure" /></div><p>Measure</p><i class="dn"></i></div>
          <div class="col center"><div class="row"><Ico n="quickcalc" /></div><div class="row"><Ico n="point" /></div><div class="row"><Ico n="calc" /></div></div>
        </div>
        <footer>Utilities<i class="dn lg"></i></footer>
      </div>
      <div class="panel p-clip">
        <div class="body">
          <div class="big w66"><div class="pic"><Ico n="paste" /></div><p class="low">Paste</p><i class="dn"></i></div>
          <div class="col"><div class="row"><Ico n="cut" /></div><div class="row"><Ico n="copyclip" /></div></div>
        </div>
        <footer>Clipboard</footer>
      </div>
      <div class="panel p-view">
        <div class="body"><div class="big w80"><div class="pic"><Ico n="base" /></div><p>Base</p><i class="dn"></i></div></div>
        <footer><span class="grow">View<i class="dn lg"></i></span><svg class="launch" width="10" height="10" viewBox="0 0 10 10"><path d="M1 1l6 6M8 2v6H2" stroke="#eee" stroke-width="1.600" fill="none" /></svg></footer>
      </div>
    </section>

    <div class="filetabs">
      <div class="ftab t1">
        <svg width="168" height="29" viewBox="0 0 168 29"><path d="M0 29C16 27 14 1 26 1H153C164 1 162 18 168 27V29z" fill="url(#tabDim)" /></svg>
        <span>Start</span>
      </div>
      <div class="ftab t2">
        <svg width="170" height="29" viewBox="0 0 170 29"><path d="M0 29C16 27 10 1 22 1H155C166 1 162 24 170 28V29z" fill="url(#tabDim)" stroke="#6b6b6b" stroke-width=".6" /></svg>
        <span>Engraving V6.dxf</span><em>✕</em>
      </div>
      <div class="ftab t3">
        <svg width="202" height="29" viewBox="0 0 202 29"><path d="M0 29C14 27 10 1 22 1H174C190 1 184 27 202 29z" fill="url(#tabLit)" /></svg>
        <svg class="lock" width="10" height="14" viewBox="0 0 10 14"><path d="M2.500 6V4c0-3 5-3 5 0v2" fill="none" stroke="#3e3e3e" stroke-width="1.500" /><path d="M1 6h8v7H1z" fill="#3e3e3e" /></svg>
        <span>Engraving V6.dxf*</span><em>✕</em>
      </div>
      <svg class="tplus" width="29" height="20" viewBox="0 0 29 20"><path d="M1 1h16c8 0 10 8 11 18H12C4 19 3 10 1 1z" fill="#525252" stroke="#606060" /><path d="M14.500 5v10M9.500 10h10" stroke="#c9c9c9" stroke-width="2.500" /></svg>
    </div>

    <main class="canvas">
      <svg class="drawing" width="1909" height="757" viewBox="0 214 1909 757">
        <g fill="none" stroke="#e4e4e4">
          <path d="M639.500 383.500H1268.500V802.500H639.500z" />
          <g class="engrave">
            <text x="678 744.800 785.700 827" y="529">Wong</text>
            <text x="887.800 944.500 985.800 1026" y="529">Quan</text>
            <text x="1086.200 1130.400 1170.500" y="529">Yao</text>
          </g>
          <g class="fillin">
            <ellipse cx="765.700" cy="509.300" rx="15" ry="17" /><ellipse cx="1191.300" cy="509.300" rx="15" ry="17" />
            <ellipse cx="917" cy="502.500" rx="22.500" ry="23.500" /><ellipse cx="846.500" cy="509" rx="12.500" ry="15.500" />
            <ellipse cx="1005" cy="517" rx="12.500" ry="8.500" transform="rotate(-16 1005 517)" /><ellipse cx="1149.600" cy="517" rx="12.500" ry="8.500" transform="rotate(-16 1149.600 517)" />
          </g>
          <path d="M524 854.500H587V917M580.500 849.500h10v10h-10zM529 838l15 15M544 838l-15 15M591 899l4 6 4-6M595.500 905v7" />
          <path d="M1602 548.500h45.500M1654 548.500h45M1650.500 500v45.500M1650.500 552v45M1647.500 545.500h6v6h-6z" />
        </g>
        <g class="controls">
          <path d="M1834 232h13v4h-13z" fill="#fff" />
          <path d="M1859.500 229.500h8v7h-8zM1862 226.500h8.500v8" fill="none" stroke="#fff" stroke-width="2.500" />
          <path d="M1885 226l9 10M1894 226l-9 10" stroke="#fff" stroke-width="3.500" />
        </g>
        <circle cx="1820" cy="331" r="57.500" fill="none" stroke="#484c54" stroke-width="13" />
        <path d="M1792.500 303.500h55v55h-55z" fill="#b7b8bb" stroke="#8c8e92" /><path d="M1803 314h34v34h-34z" fill="#a3a8b0" />
        <g class="compass">
          <text x="1820" y="278">S</text><text x="1820" y="398">N</text>
          <text transform="translate(1759.500 323) rotate(180)">E</text><text transform="translate(1880 323) rotate(180)">W</text>
          <text class="top" transform="translate(1820 326) rotate(180)">TOP</text>
        </g>
        <rect x="1791.500" y="424.500" width="56" height="20" rx="5" fill="#9b9dab" stroke="#7f828e" />
        <text class="wcs" x="1796" y="439">WCS</text><path d="M1833 432h9l-4.500 5z" fill="none" stroke="#d0d2da" />
        <rect x="1864.500" y="475.500" width="41" height="260" rx="4" fill="#575c60" stroke="#181c22" />
        <g fill="none" stroke="#434850" stroke-width="1.500">
          <circle cx="1897.500" cy="482" r="4.500" /><path d="M1895.500 480l4 4m0-4l-4 4M1894 728h7" /><circle cx="1897.500" cy="728" r="4.500" />
          <path d="M1884 497h14v14a13.500 13.500 0 1 1-14-14z" fill="#51575f" /><circle cx="1884.500" cy="510.500" r="8" />
          <path d="M1878 572l-7-10c1-3 4-1 6 2l-2-13c1-3 3-2 4 0l2 9 0-12c1-2 4-2 4 0l1 12 3-11c1-2 4-1 4 1l-2 13 4-5c2-1 4 0 3 2l-6 12c-1 3-2 4-3 5h-9z" fill="#51575f" />
          <path d="M1871 585l18 18M1889 585l-18 18" /><path d="M1870 584h6l-6 6zM1890 584v6l-6-6zM1870 604v-6l6 6z" fill="#434850" /><circle cx="1891" cy="604" r="7" fill="#51575f" /><path d="M1896 609l5 5" stroke-width="3.500" />
          <path d="M1884 631l5 6h-3v21h-4v-21h-3z" fill="#51575f" /><ellipse cx="1885" cy="647" rx="13" ry="4.500" /><path d="M1878 647v7l-6-3.500z" fill="#434850" />
          <path d="M1870.500 683.500h8v8h-8zM1880.500 683.500h8v8h-8zM1890.500 683.500h8v8h-8zM1870.500 694.500h20v16h-20z" fill="#51575f" /><path d="M1877 698v9l7-4.500z" fill="#434850" />
        </g>
        <path d="M1882 535h7l-3.500 3.500zM1882 622h7l-3.500 3.500zM1882 669h7l-3.500 3.500z" fill="#3c4148" />
        <path d="M1868 544.500h34M1868 678.500h34" stroke="#686d70" />
      </svg>
      <div class="vplabel">[−][Top][2D Wireframe]</div>
      <div class="cmd">
        <div v-for="n in history" :key="n" class="hist" :class="'h' + n">Command:&nbsp; Regenerating model.</div>
        <div class="cmdbar">
          <div class="handle">
            <svg width="66" height="32" viewBox="0 0 66 32">
              <path d="M6 6v22M10 6v22" stroke="#aaa" stroke-width="2" stroke-dasharray="2 2" />
              <path d="M19 11.500l10 10M29 11.500l-10 10" stroke="#d5d5d5" stroke-width="2.300" />
              <path d="M44 11c0-3 3-5 6-4l-2 3 2 2 3-1c1 3 0 4-1 5l9 8-3 3-9-9c-3 0-5-2-5-7z" fill="#b9bec8" stroke="#2d2f33" stroke-width=".6" />
            </svg>
          </div>
          <div class="cmdinput">
            <svg width="34" height="20" viewBox="0 0 34 20"><rect x=".5" y="1.500" width="18" height="17" rx="2" fill="#a6b0bf" stroke="#8490a3" /><path d="M4 5l5 4.500-5 4.500M10 14.500h5" fill="none" stroke="#3f4a5c" stroke-width="1.800" /><path d="M23 8h8l-4 4.500z" fill="#666" /></svg>
            <span>Type a command</span><svg width="10" height="6" viewBox="0 0 10 6"><path d="M0 6h10L5 0z" fill="#222" /></svg>
          </div>
        </div>
      </div>
      <div class="edge"></div>
    </main>

    <div class="bottom">
      <div class="layouts">
        <svg class="lt" width="204" height="23" viewBox="0 0 204 23">
          <path d="M80 1H176C162 3 169 22 158 22H96C86 22 90 8 86 1z" fill="#565656" stroke="#646464" stroke-width=".7" />
          <path d="M2 0H96C80 2 88 22 78 22H23C12 22 18 2 2 0z" fill="url(#modelLit)" />
          <path d="M184 2h17c0 12-4 18-12 18h-16c0-10 3-18 11-18z" fill="#505050" stroke="#626262" /><path d="M187 6v10M182 11h10" stroke="#c9c9c9" stroke-width="2.500" />
        </svg>
        <div class="ltext"><b>Model</b><span>Layout1</span></div>
      </div>
      <div class="status">
        <div class="box s1">MODEL</div>
        <div class="box s2"><Ico n="sgrid" /><Ico n="sdots" /><i class="dn md"></i></div>
        <div class="box s3"><Ico n="ortho" /><Ico n="polar" /><i class="dn md"></i><Ico n="iso" /><i class="dn md"></i></div>
        <div class="box s4"><Ico n="otrack" /><Ico n="osnap" /><i class="dn md"></i></div>
        <div class="box s5"><Ico n="lweight" /></div>
        <div class="box s6"><Ico n="annoblue" /><Ico n="annoauto" /><Ico n="anno" /><span>1:1<i class="dn md"></i></span></div>
        <div class="box s7"><Ico n="gear" /><i class="dn md"></i></div>
        <div class="box s8"><Ico n="plus" /></div>
        <div class="box s9"><Ico n="isolate" /></div>
        <div class="box s10"><Ico n="hw" /></div>
        <div class="box s11"></div>
        <div class="box s12"><Ico n="full" /><Ico n="menu" /></div>
      </div>
    </div>

    <div class="taskbar">
      <div class="start"><svg width="20" height="20" viewBox="0 0 20 20"><path d="M0 3l8.300-1.200v7.700H0zM9.300 1.600L20 0v9.500H9.300zM0 10.500h8.300v7.700L0 17zM9.300 10.500H20V20L9.300 18.400z" fill="#fff" /></svg></div>
      <div class="search"><svg width="21" height="21" viewBox="0 0 21 21"><circle cx="13.500" cy="7.500" r="6.500" fill="none" stroke="#fff" stroke-width="1.400" /><path d="M9 12l-8.500 8.500" stroke="#fff" stroke-width="1.400" /></svg><span>Type here to search</span></div>
      <div class="tv"><Ico n="taskview" /></div>
      <div v-for="a in apps" :key="a[0]" class="task" :class="'k' + a[1]"><Ico :n="a[0]" /></div>
      <div class="tray">
        <Ico n="chevron" /><Ico n="battery" /><Ico n="wifi" /><Ico n="mute" /><Ico n="cloud" />
        <span class="eng">ENG</span>
        <div class="clock"><span>4:03 AM</span><span>8/16/2020</span></div>
        <div class="note"><Ico n="notif" /><b>7</b></div>
      </div>
    </div>
  </div>
</template>

<style>
body { margin: 0; background: #212830; overflow: hidden; }
</style>

<style scoped>
.app { width: 1920px; height: 1080px; display: flex; flex-direction: column; overflow: hidden; position: relative; font: 14.5px/20px "Open Sans", "Noto Sans", sans-serif; letter-spacing: -0.3px; color: #f2f2f2; background: #383838; box-sizing: border-box; white-space: nowrap; }
.app * { box-sizing: border-box; }
.defs { position: absolute; }
.ico { flex: none; display: block; }
p { margin: 0; }
.dn { flex: none; display: block; width: 6px; height: 4px; background: #f2f2f2; clip-path: polygon(0 0, 100% 0, 50% 100%); }
.dn.lg { width: 10px; height: 6px; }
.dn.md { width: 8px; height: 6px; }
.dn.dim { background: #bbb; }

.titlebar { height: 29px; flex: none; display: flex; background: #fff; }
.qat, .info { background: linear-gradient(#a0a0a0, #6a6a6a 60%, #4e4e4e); display: flex; align-items: center; padding-bottom: 1px; }
.qat { width: 317px; padding-left: 60px; }
.q2 { margin-left: 10px; } .q3 { margin-left: 12px; } .q4 { margin-left: 10px; } .q5 { margin-left: 10px; } .q6 { margin-left: 11px; }
.q7 { margin-left: 8px; } .q8 { margin-left: 10px; } .q9 { margin-left: 8px; } .q10 { margin-left: 9px; }
.title { flex: 1; color: #111; display: flex; justify-content: center; gap: 20px; padding: 5px 0 0; letter-spacing: -.03px; }
.info { width: 558px; }
.rt { width: 5px; height: 10px; margin: 0 7px 0 5px; background: #fff; clip-path: polygon(0 0, 100% 50%, 0 100%); }
.keyword { width: 225px; height: 28px; margin-right: 4px; background: #737373; border: 1px solid #3a3a3a; border-top: 0; font-style: italic; color: #cfcfcf; line-height: 27px; padding-left: 3px; letter-spacing: -0.4px; font-size: 14.5px; }
.keyword { letter-spacing: -0.32px; }
.usr { margin-left: 10px; }
.uname { width: 112px; padding-left: 7px; letter-spacing: -.3px; }
.cart { margin: 0 10px 0 14px; } .tri { margin-right: 6px; }
.sep { width: 1px; height: 28px; background: #9a9a9a; margin: 0 11px 0 13px; }
.hd { margin-left: 10px; }
.win { width: 205px; display: flex; gap: 46px; padding: 8px 0 0 50px; }
.appbtn { position: absolute; left: 0; top: 0; width: 50px; height: 50px; background: linear-gradient(#bdbdbd, #6f6f6f); border: 1px solid #111; border-width: 0 2px 2px 0; }

.menu { height: 25px; flex: none; background: #535353; border-top: 1px solid #2c2c2c; border-bottom: 1px solid #2c2c2c; padding: 2px 0 0 56px; display: flex; color: #d2d2d2; letter-spacing: -.2px; }
.menu span { padding: 0 12px; line-height: 21px; height: 22px; }
.menu .on { background: linear-gradient(#7a7a7a, #5c5c5c); border: 1px solid #333; border-bottom: 0; color: #fff; line-height: 20px; padding: 0 11px; border-radius: 2px 2px 0 0; height: 23px; }
.ribtoggle { margin: 5px 0 0 27px; }

.ribbon { height: 124px; flex: none; display: flex; background: #474747; border-bottom: 1px solid #8d8d8d; }
.panel { display: flex; flex-direction: column; height: 123px; background: #5c5c5c; border-right: 1px solid #434343; border-bottom: 1px solid #2c2c2c; }
.body { height: 100px; display: flex; padding-top: 4px; }
.panel footer { flex: 1; display: flex; align-items: center; justify-content: center; gap: 7px; background: linear-gradient(#4a4a4a, #545454); border: 1px solid #606060; border-width: 0 1px; font-size: 14.7px; }
.grow { flex: 1; display: flex; justify-content: center; align-items: center; gap: 7px; }
.launch { margin-right: 4px; flex: none; }
.p-draw { width: 278px; } .p-modify { width: 316px; } .p-annot { width: 210px; } .p-layers { width: 342px; } .p-block { width: 100px; }
.p-props { width: 277px; } .p-groups { width: 85px; } .p-util { width: 121px; } .p-clip { width: 99px; } .p-view { width: 80px; }
.big { display: flex; flex-direction: column; align-items: center; flex: none; }
.pic { height: 45px; display: flex; align-items: center; justify-content: center; margin-bottom: 3px; }
.letter { font: 46px/45px "Liberation Sans", sans-serif; color: #dedede; }
.big .dn { margin-top: 4px; }
.low { padding-top: 1px; }
.w53 { width: 53px; } .w52 { width: 52px; } .w72 { width: 72px; } .w42 { width: 42px; } .w58 { width: 58px; } .w74 { width: 74px; }
.w77 { width: 77px; } .w76 { width: 76px; } .w50 { width: 50px; } .w88 { width: 88px; } .w66 { width: 66px; } .w80 { width: 80px; }
.col { display: flex; flex-direction: column; }
.row { height: 31px; display: flex; align-items: center; }
.ml9 { margin-left: 9px; } .ml10 { margin-left: 10px; } .ml7 { margin-left: 7px; }
.lbl { margin-left: 7px; }
.slot { width: 20px; display: flex; justify-content: center; }
.m0 { margin-left: 7px; width: 91px; } .m1 { width: 88px; } .m2 { width: 77px; } .m3 { margin-left: 18px; }
.push { margin-left: auto; }
.combo { height: 29px; display: flex; align-items: center; background: linear-gradient(#727272, #585858); border: 2px solid #343434; border-width: 1px 2px 2px; }
.combo .dn { margin: 0 1px 0 auto; }
.layercombo { width: 262px; height: 30px; margin-bottom: 1px; gap: 6px; padding-left: 8px; }
.swatch { width: 18px; height: 18px; background: #fff; border: 1px solid #222; }
.lrow { gap: 10px; padding-left: 5px; }
.lrow .lbl { margin-left: -3px; }
.p-block .w53 { margin-right: 2px; }
.combos { display: flex; flex-direction: column; gap: 1px; padding-top: 2px; margin-left: 3px; width: 172px; }
.picol { margin-left: 2px; }
.sw2 { width: 20px; height: 20px; border-color: #bbb; margin-left: 13px; }
.by { margin-left: 12px; }
u { height: 2px; background: #c6c6c6; margin-right: 2px; }
.l1 { width: 74px; margin-left: 9px; } .l2 { width: 80px; margin-left: 3px; }
.gcol { width: 30px; } .gcol .row { justify-content: center; }
.sel { background: linear-gradient(#6f93c9, #4f73ab); border: 1px solid #273b5e; height: 28px; margin-top: 1px; }
.center .row { justify-content: center; }
.p-util .center { margin-left: 2px; }
.p-clip .col { margin-left: 3px; }

.filetabs { height: 36px; flex: none; background: #383838; border-bottom: 5px solid #5a5a5a; display: flex; align-items: flex-end; }
.ftab { display: grid; height: 29px; align-items: center; color: #b6b6b6; flex: none; font-size: 15px; letter-spacing: -.4px; }
.ftab > svg:first-child, .ftab > span, .ftab > em { grid-row: 1; }
.ftab > svg:first-child { grid-column: 1 / -1; }
.ftab em { font: bold 14px "DejaVu Sans", sans-serif; color: #373737; }
.t1 { width: 168px; margin-left: 15px; grid-template-columns: 24px 1fr; } .t1 span { grid-column: 2; }
.t2 { width: 170px; margin-left: -8px; grid-template-columns: 18px 121px 1fr; } .t2 span { grid-column: 2; } .t2 em { grid-column: 3; }
.t3 { width: 202px; margin-left: -10px; grid-template-columns: 19px 15px 126px 1fr; color: #fff; } .t3 span { grid-column: 3; } .t3 em { grid-column: 4; }
.lock { grid-row: 1; grid-column: 2; }
.tplus { margin: 0 0 3px -6px; }

.canvas { height: 757px; flex: none; position: relative; background: #212830; }
.drawing { position: absolute; left: 0; top: 0; }
.engrave text { font: 74.5px "Liberation Sans", Arial, sans-serif; letter-spacing: 0; }
.fillin { fill: #212830; stroke: none; }
.compass text { font: bold 22px "Liberation Sans", sans-serif; fill: #aeb0b3; text-anchor: middle; letter-spacing: 0; }
.compass .top { font-size: 14px; fill: #4a505c; letter-spacing: -.8px; }
.wcs { font: 13.5px "Liberation Sans", sans-serif; fill: #4c4f5a; letter-spacing: 0; }
.vplabel { position: absolute; left: 2px; top: 6px; color: #fff; letter-spacing: -.02px; }
.cmd { position: absolute; left: 512px; top: 649px; width: 896px; font: 15px/19px "DejaVu Sans Mono", monospace; letter-spacing: 0; }
.hist { margin: 0 0 6px 75px; width: 266px; height: 19px; padding: 1px 0 0 2px; border-radius: 2px; background: #4d5054; color: #b2b3b5; }
.h2 { background: #55575a; color: #d5d6d7; } .h3 { background: #5f6163; color: #fff; margin-bottom: 5px; }
.cmdbar { display: flex; height: 34px; border: 1px solid #5a5a5a; }
.handle { width: 67px; background: linear-gradient(#6b6b6b, #333); }
.cmdinput { flex: 1; background: #bbbcbf; border-radius: 2px; display: flex; align-items: center; padding: 0 6px; color: #77787b; font-style: italic; }
.cmdinput span { flex: 1; margin: 1px 0 0 5px; }
.edge { position: absolute; left: 1909px; top: 0; width: 11px; height: 757px; background: linear-gradient(90deg, transparent 7px, #17c5e8 7px 8px, #101418 8px 10px, #fff 10px), linear-gradient(#b4cfe9, #d3e2f2 90px, #b7cfea 90px); }

.bottom { height: 59px; flex: none; background: #383838; border-top: 1px solid #5e5e5e; display: flex; justify-content: space-between; }
.layouts { display: grid; align-self: flex-start; }
.lt, .ltext { grid-area: 1 / 1; }
.ltext { display: flex; padding: 1px 0 0 28px; gap: 31px; color: #b2b2b2; }
.ltext b { color: #fff; width: 42px; }
.status { display: flex; height: 33px; align-self: flex-end; width: 739px; }
.box { display: flex; align-items: center; justify-content: space-around; background: #4d4d4d; border: 2px solid #6b6b6b; border-width: 2px 1px; flex: none; margin-right: 1px; color: #fff; }
.s1 { width: 62px; letter-spacing: -.1px; padding-bottom: 1px; } .s2 { width: 80px; padding: 0 0 0 1px; } .s3 { width: 129px; margin-right: 0; } .s4 { width: 80px; margin-right: 0; } .s5 { width: 32px; }
.s6 { width: 133px; } .s6 span { display: flex; align-items: center; gap: 5px; } .s7 { width: 50px; margin-right: 0; } .s8 { width: 32px; } .s9 { width: 32px; } .s10 { width: 33px; } .s11 { width: 5px; } .s12 { width: 64px; margin: 0; }

.taskbar { height: 50px; flex: none; display: flex; color: #fff; background: linear-gradient(90deg, #33262a 0, #33262a 3%, #412c42 25.6%, #2b2c3d 28.5%, #4a2a38 34%, #542d3a 39%, #3f2a2b 45%, #44343a 52%, #452c38 57%, #38292c 61%, #2c343d 65%, #342f37 68%, #44262b 73%, #45262a 78%, #4e3044 84%, #452838 92%, #482c2e 96%, #3f2427 100%); }
.start { width: 60px; display: grid; place-items: center; }
.search { width: 430px; background: #333; border: 1px solid #606060; display: flex; align-items: center; padding-left: 14px; font-size: 18.5px; color: #dcdcdc; letter-spacing: -.25px; }
.search span { margin-left: 14px; }
.tv { width: 63px; display: grid; place-items: center; padding-right: 4px; }
.task { width: 60px; display: grid; place-items: center; position: relative; flex: none; }
.k1::after, .k2::after, .k3::after { content: ""; position: absolute; left: 5px; bottom: 0; width: 50px; height: 3px; background: #76b9ed; }
.k2::after { background: linear-gradient(90deg, #76b9ed 39px, #557fa4 39px); }
.k3 { background: #74525a; width: 58px; } .k3::after { left: 0; width: 58px; }
.tray { flex: 1; display: flex; align-items: center; padding-left: 9px; }
.tray > .ico { margin-right: 10px; }
.tray > .ico:first-child { margin-right: 11px; }
.eng { width: 41px; margin-left: 2px; }
.clock { width: 76px; display: flex; flex-direction: column; align-items: center; gap: 2px; letter-spacing: -.3px; }
.note { position: relative; margin-left: 17px; }
.note b { position: absolute; left: 9px; top: 11px; width: 20px; height: 20px; border-radius: 50%; background: #3d3d3d; border: 1px solid #999; font-size: 13px; line-height: 18px; text-align: center; }
</style>
